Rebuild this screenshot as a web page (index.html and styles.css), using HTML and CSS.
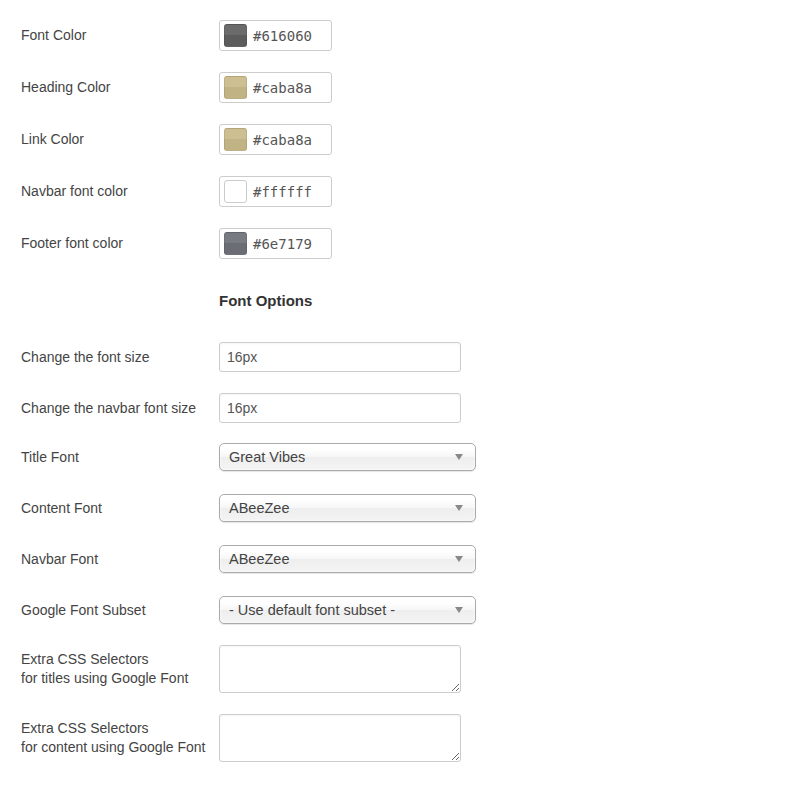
FILE: index.html
```html
<!DOCTYPE html>
<html lang="en">
<head>
    <meta charset="UTF-8">
    <title>Theme Options</title>
    <link rel="stylesheet" href="styles.css">
</head>
<body>
    <form class="options">
        <div class="row row-color">
            <label>Font Color</label>
            <div class="color-field">
                <span class="swatch" style="background-color: #616060"></span>
                <span class="hex">#616060</span>
            </div>
        </div>
        <div class="row row-color">
            <label>Heading Color</label>
            <div class="color-field">
                <span class="swatch" style="background-color: #caba8a"></span>
                <span class="hex">#caba8a</span>
            </div>
        </div>
        <div class="row row-color">
            <label>Link Color</label>
            <div class="color-field">
                <span class="swatch" style="background-color: #caba8a"></span>
                <span class="hex">#caba8a</span>
            </div>
        </div>
        <div class="row row-color">
            <label>Navbar font color</label>
            <div class="color-field">
                <span class="swatch swatch-light" style="background-color: #ffffff"></span>
                <span class="hex">#ffffff</span>
            </div>
        </div>
        <div class="row row-color">
            <label>Footer font color</label>
            <div class="color-field">
                <span class="swatch" style="background-color: #6e7179"></span>
                <span class="hex">#6e7179</span>
            </div>
        </div>

        <div class="row row-heading">
            <span></span>
            <h3>Font Options</h3>
        </div>

        <div class="row row-text">
            <label>Change the font size</label>
            <input type="text" class="text-field" value="16px">
        </div>
        <div class="row row-text group-end">
            <label>Change the navbar font size</label>
            <input type="text" class="text-field" value="16px">
        </div>

        <div class="row row-select">
            <label>Title Font</label>
            <div class="chosen"><span>Great Vibes</span><b></b></div>
        </div>
        <div class="row row-select">
            <label>Content Font</label>
            <div class="chosen"><span>ABeeZee</span><b></b></div>
        </div>
        <div class="row row-select">
            <label>Navbar Font</label>
            <div class="chosen"><span>ABeeZee</span><b></b></div>
        </div>
        <div class="row row-select group-end">
            <label>Google Font Subset</label>
            <div class="chosen"><span>- Use default font subset -</span><b></b></div>
        </div>

        <div class="row row-area">
            <label>Extra CSS Selectors<br>for titles using Google Font</label>
            <textarea class="area-field"></textarea>
        </div>
        <div class="row row-area">
            <label>Extra CSS Selectors<br>for content using Google Font</label>
            <textarea class="area-field"></textarea>
        </div>
    </form>
</body>
</html>
```

FILE: styles.css
```css
body {
    margin: 0;
    background: #fff;
    font-family: "Liberation Sans", Arial, sans-serif;
    font-size: 14px;
    color: #444;
}

.options {
    padding: 20px 0 0 21px;
}

.row {
    display: grid;
    grid-template-columns: 198px auto;
    align-items: center;
    justify-content: start;
}

.row label {
    line-height: 19px;
}

/* colour pickers */
.row-color {
    margin-bottom: 21px;
}

.color-field {
    box-sizing: border-box;
    width: 113px;
    height: 31px;
    border: 1px solid #ccc;
    border-radius: 3px;
    display: flex;
    align-items: center;
    padding-left: 4px;
    gap: 6px;
}

.swatch {
    width: 23px;
    height: 23px;
    border-radius: 3px;
    box-sizing: border-box;
    background-image: linear-gradient(rgba(255, 255, 255, 0.07) 50%, rgba(0, 0, 0, 0.04) 50%);
    border: 1px solid rgba(0, 0, 0, 0.08);
}

.swatch-light {
    background-image: none;
    border-color: #ccc;
}

.hex {
    font-family: "DejaVu Sans Mono", "Liberation Mono", monospace;
    font-size: 14px;
    color: #555;
}

/* section heading */
.row-heading {
    margin: 32px 0 31px;
}

.row-heading h3 {
    margin: 0;
    font-size: 15px;
    font-weight: bold;
    color: #333;
    line-height: 20px;
}

/* plain text inputs */
.row-text {
    margin-bottom: 21px;
}

.text-field {
    box-sizing: border-box;
    width: 242px;
    height: 30px;
    margin: 0;
    padding: 0 7px;
    border: 1px solid #ccc;
    border-radius: 3px;
    font-family: "Liberation Sans", Arial, sans-serif;
    font-size: 14px;
    color: #555;
    box-shadow: inset 0 1px 2px rgba(0, 0, 0, 0.04);
}

/* chosen-style dropdowns */
.row-select {
    margin-bottom: 23px;
}

.row-text.group-end {
    margin-bottom: 20px;
}

.row-select.group-end {
    margin-bottom: 21px;
}

.chosen {
    box-sizing: border-box;
    width: 257px;
    height: 28px;
    border: 1px solid #aaa;
    border-radius: 5px;
    background: linear-gradient(#fff 20%, #f6f6f6 50%, #eee 52%, #f4f4f4 100%);
    box-shadow: 0 0 3px #fff inset, 0 1px 1px rgba(0, 0, 0, 0.1);
    display: flex;
    align-items: center;
    justify-content: space-between;
    padding: 0 12px 0 9px;
    font-size: 14.5px;
    color: #444;
}

.chosen b {
    width: 0;
    height: 0;
    border-left: 4px solid transparent;
    border-right: 4px solid transparent;
    border-top: 6px solid #888;
}

/* textareas */
.row-area {
    align-items: start;
    margin-bottom: 21px;
}

.row-area label {
    padding-top: 5px;
}

.area-field {
    box-sizing: border-box;
    width: 242px;
    height: 48px;
    margin: 0;
    border: 1px solid #ccc;
    border-radius: 3px;
    display: block;
    box-shadow: inset 0 1px 2px rgba(0, 0, 0, 0.04);
}
```
